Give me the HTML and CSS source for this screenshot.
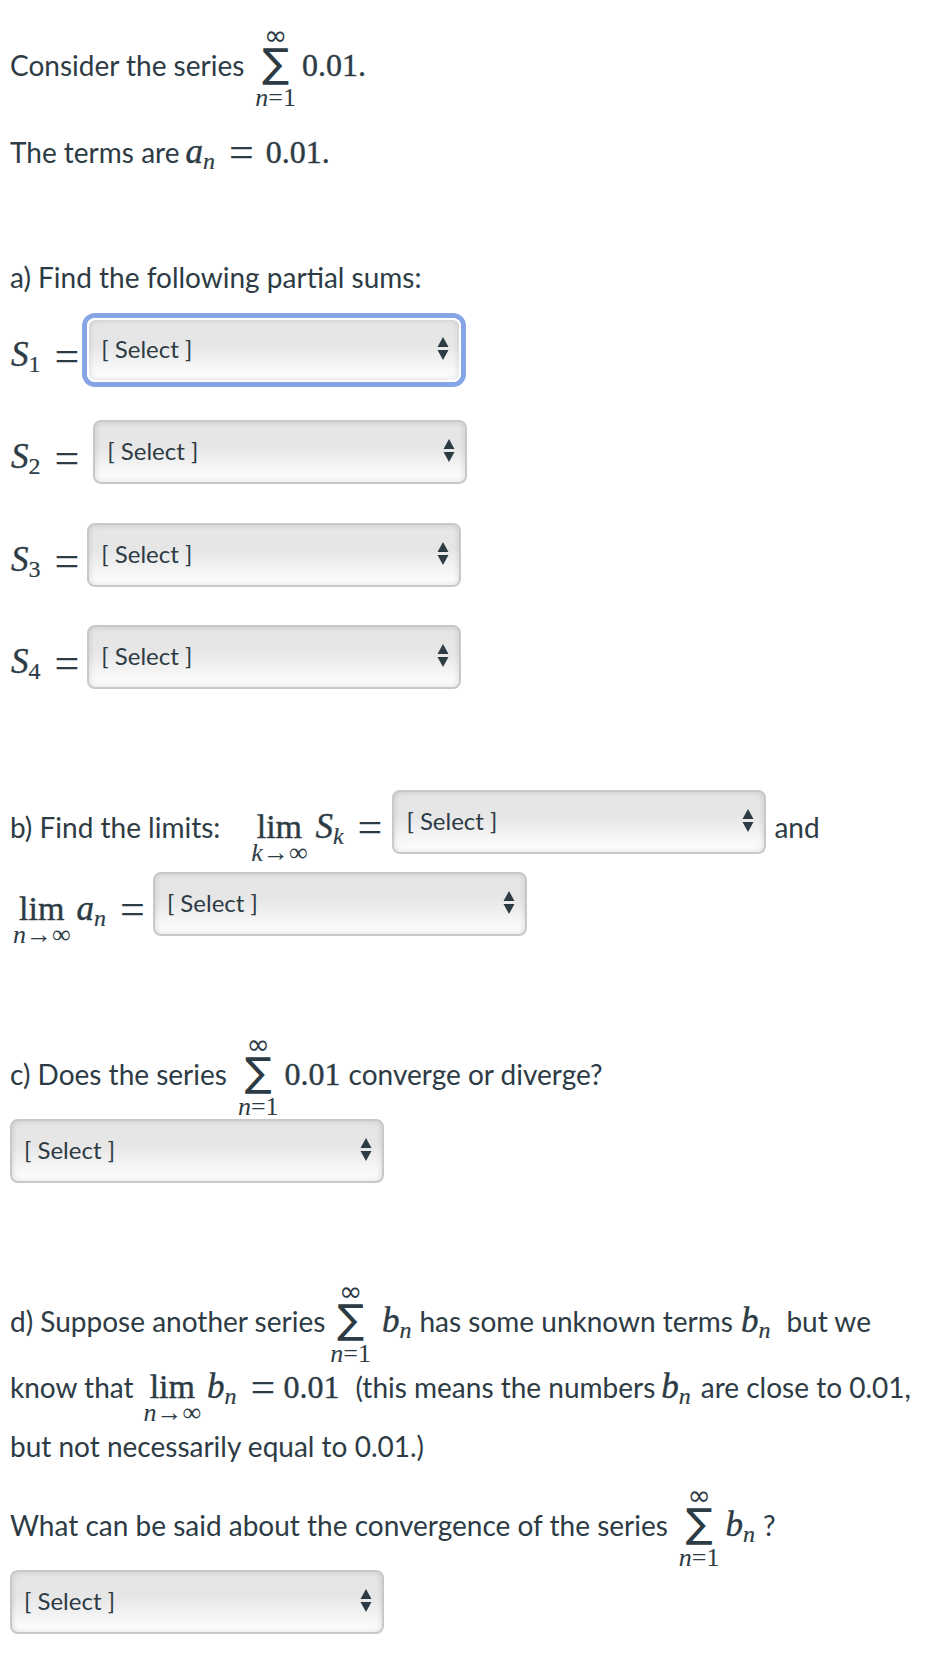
FILE: index.html
```html
<!DOCTYPE html>
<html lang="en">
<head>
    <meta charset="UTF-8">
    <meta name="viewport" content="width=device-width, initial-scale=1.0">
    <title>Series quiz question</title>
    <link rel="stylesheet" href="styles.css">
</head>
<body>

<svg class="defs" width="0" height="0">
    <symbol id="arrows" viewBox="0 0 12 23">
        <path d="M6 0 L11.5 10 L0.5 10 Z M0.5 13 L11.5 13 L6 23 Z"/>
    </symbol>
</svg>

<div class="row">
    <span>Consider the series</span>
    <span class="sum"><span class="top">∞</span><span class="sigma">∑</span><span class="bottom"><i>n</i>=1</span></span>
    <span class="math">0.01.</span>
</div>

<div class="row gap-27">
    <span>The terms are</span>
    <span class="math left-6"><i>a</i><i class="sub">n</i></span>
    <span class="math eq">=</span>
    <span class="math left-12">0.01.</span>
</div>

<div class="row gap-65">a) Find the following partial sums:</div>

<!-- a) -->
<div class="row gap-18">
    <span class="math partial"><i>S</i><span class="sub">1</span></span>
    <span class="math eq low">=</span>
    <div class="select focused left-8"><span>[ Select ]</span><svg class="arrows"><use href="#arrows"/></svg></div>
</div>
<div class="row gap-42">
    <span class="math partial"><i>S</i><span class="sub">2</span></span>
    <span class="math eq low">=</span>
    <div class="select left-14"><span>[ Select ]</span><svg class="arrows"><use href="#arrows"/></svg></div>
</div>
<div class="row gap-43">
    <span class="math partial"><i>S</i><span class="sub">3</span></span>
    <span class="math eq low">=</span>
    <div class="select left-8"><span>[ Select ]</span><svg class="arrows"><use href="#arrows"/></svg></div>
</div>
<div class="row gap-42">
    <span class="math partial"><i>S</i><span class="sub">4</span></span>
    <span class="math eq low">=</span>
    <div class="select left-8"><span>[ Select ]</span><svg class="arrows"><use href="#arrows"/></svg></div>
</div>

<!-- b) -->
<div class="row gap-105">
    <span>b) Find the limits:</span>
    <span class="lim left-31"><span class="lim-word">lim</span><span class="bottom"><i>k</i>→∞</span></span>
    <span class="math left-8"><i>S</i><i class="sub">k</i></span>
    <span class="math eq">=</span>
    <div class="select left-10"><span>[ Select ]</span><svg class="arrows"><use href="#arrows"/></svg></div>
    <span class="left-8">and</span>
</div>
<div class="row gap-22">
    <span class="lim left-3"><span class="lim-word">lim</span><span class="bottom"><i>n</i>→∞</span></span>
    <span class="math left-6"><i>a</i><i class="sub">n</i></span>
    <span class="math eq">=</span>
    <div class="select left-8"><span>[ Select ]</span><svg class="arrows"><use href="#arrows"/></svg></div>
</div>

<!-- c) -->
<div class="row gap-105">
    <span>c) Does the series</span>
    <span class="sum"><span class="top">∞</span><span class="sigma">∑</span><span class="bottom"><i>n</i>=1</span></span>
    <span class="math">0.01</span>
    <span class="left-8">converge or diverge?</span>
</div>
<div class="row gap-22">
    <div class="select"><span>[ Select ]</span><svg class="arrows"><use href="#arrows"/></svg></div>
</div>

<!-- d) -->
<div class="row gap-105">
    <span>d) Suppose another series</span>
    <span class="sum tight"><span class="top">∞</span><span class="sigma">∑</span><span class="bottom"><i>n</i>=1</span></span>
    <span class="math"><i>b</i><i class="sub">n</i></span>
    <span class="left-8">has some unknown terms</span>
    <span class="math left-8"><i>b</i><i class="sub">n</i></span>
    <span class="left-16">but we</span>
</div>
<div class="row gap-6">
    <span>know that</span>
    <span class="lim left-10"><span class="lim-word">lim</span><span class="bottom"><i>n</i>→∞</span></span>
    <span class="math left-6"><i>b</i><i class="sub">n</i></span>
    <span class="math eq">=</span>
    <span class="math left-8">0.01</span>
    <span class="left-16">(this means the numbers</span>
    <span class="math left-6"><i>b</i><i class="sub">n</i></span>
    <span class="left-10">are close to 0.01,</span>
</div>
<div class="row gap-neg">but not necessarily equal to 0.01.)</div>

<div class="row gap-19">
    <span>What can be said about the convergence of the series</span>
    <span class="sum"><span class="top">∞</span><span class="sigma">∑</span><span class="bottom"><i>n</i>=1</span></span>
    <span class="math"><i>b</i><i class="sub">n</i></span>
    <span class="left-8">?</span>
</div>
<div class="row gap-22">
    <div class="select"><span>[ Select ]</span><svg class="arrows"><use href="#arrows"/></svg></div>
</div>

</body>
</html>
```

FILE: styles.css
```css
body {
    margin: 0;
    padding: 35px 0 24px 10px;
    font-family: Lato, sans-serif;
    font-size: 28px;
    color: #2d3b45;
    background-color: #fff;
}
.defs {
    display: block;
}
.row {
    display: flex;
    align-items: center;
    height: 60px;
    white-space: nowrap;
}

/* vertical gaps between rows */
.gap-6 { margin-top: 6px; }
.gap-18 { margin-top: 18px; }
.gap-19 { margin-top: 19px; }
.gap-22 { margin-top: 22px; }
.gap-27 { margin-top: 27px; }
.gap-42 { margin-top: 42px; }
.gap-43 { margin-top: 43px; }
.gap-65 { margin-top: 65px; }
.gap-105 { margin-top: 105px; }
.gap-neg { margin-top: -1px; }

.left-3 { margin-left: 3px; }
.left-6 { margin-left: 6px; }
.left-8 { margin-left: 8px; }
.left-10 { margin-left: 10px; }
.left-12 { margin-left: 12px; }
.left-14 { margin-left: 14px; }
.left-16 { margin-left: 16px; }
.left-31 { margin-left: 31px; }

/* math */
.math {
    font-family: "Liberation Serif", serif;
    font-size: 32px;
    -webkit-text-stroke: 0.4px;
}
.math i {
    font-size: 35px;
}
.math .sub {
    font-size: 24px;
    vertical-align: -6px;
    line-height: 0;
    -webkit-text-stroke: 0.2px;
}
.math.eq {
    margin-left: 14px;
    font-size: 44px;
    font-weight: normal;
    -webkit-text-stroke: 0;
}
.partial {
    padding-left: 1px;
}
.low {
    padding-top: 2px;
}
.sum {
    display: flex;
    flex-direction: column;
    align-items: center;
    margin: 0 6px 0 11px;
    padding-top: 6px;
    font-family: "DejaVu Sans", sans-serif;
}
.sum.tight {
    margin: 0 11px 0 5px;
}
.sum .top {
    font-size: 28px;
    line-height: 18px;
}
.sum .sigma {
    margin: -2px 0 4px;
    font-size: 40px;
    line-height: 40px;
}
.bottom {
    font-family: "Liberation Serif", serif;
    font-size: 26px;
    line-height: 22px;
}
.lim {
    display: flex;
    flex-direction: column;
    align-items: center;
    padding-top: 22px;
    font-family: "Liberation Serif", serif;
}
.lim-word {
    font-size: 34px;
    line-height: 30px;
    -webkit-text-stroke: 0.4px;
}

/* select boxes */
.select {
    display: flex;
    align-items: center;
    justify-content: space-between;
    box-sizing: border-box;
    width: 374px;
    height: 64px;
    margin-bottom: 11px;
    padding: 0 10px 2px 12px;
    font-size: 24px;
    border: 2px solid #c8c8c8;
    border-radius: 8px;
    background: linear-gradient(#e6e6e6 40%, #fff 100%);
    box-shadow: inset 0 0 6px rgba(0, 0, 0, 0.14);
}
.select.focused {
    border-color: #fff;
    box-shadow: 0 0 0 5px #85a5e6, inset 0 0 6px rgba(0, 0, 0, 0.14);
}
.arrows {
    width: 12px;
    height: 23px;
    fill: #2d3b45;
}
```
